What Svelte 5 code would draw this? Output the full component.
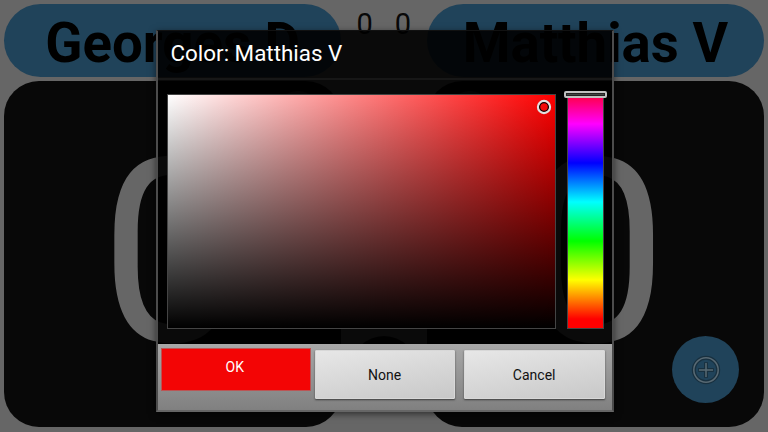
<script>
  const players = [{ name: 'Georges D', score: 0 }, { name: 'Matthias V', score: 0 }];
  const sets = [0, 0];
</script>

<main class="screen">
  <header class="names">
    <div class="pill"><span class="first">{players[0].name}</span></div>
    <div class="sets">{#each sets as value}<span>{value}</span>{/each}</div>
    <div class="pill"><span class="second">{players[1].name}</span></div>
  </header>
  <section class="cards">
    {#each players as player}
      <div class="card"><span class="score">{player.score}</span></div>
    {/each}
  </section>
  <i class="swap"></i>
  <i class="dot left"></i>
  <i class="dot right"></i>
  <div class="fab">
    <svg viewBox="0 0 32 32" width="32" height="32" fill="none">
      <circle cx="16" cy="16" r="12.2" stroke="#18303f" stroke-width="4" />
      <path d="M16 8.2v15.6M8.2 16h15.6" stroke="#18303f" stroke-width="4" />
      <circle cx="16" cy="16" r="12.2" stroke="#586973" stroke-width="1.5" />
      <path d="M16 9v14M9 16h14" stroke="#586973" stroke-width="1.5" />
    </svg>
  </div>
</main>

<div class="dialog" role="dialog" aria-label="Color">
  <h1>Color: Matthias V</h1>
  <div class="picker">
    <div class="field"><svg class="pointer" viewBox="0 0 16 16" width="16" height="16" fill="none"><circle cx="8" cy="8" r="4.5" stroke="#100" stroke-width="1.5" /><circle cx="8" cy="8" r="6.1" stroke="#e0e0e0" stroke-width="2.1" /></svg></div>
    <div class="hue"><i class="tracker"></i></div>
  </div>
  <footer>
    <button class="ok">OK</button>
    <button>None</button>
    <button>Cancel</button>
  </footer>
</div>

<style>
  :global(body) { background: #666; overflow: hidden; }
  * { box-sizing: border-box; }
  .screen {
    position: relative; width: 768px; height: 432px; padding: 4px 4px 5px 3.5px;
    display: flex; flex-direction: column; gap: 4px; overflow: hidden;
    background: #666; font-family: Roboto, sans-serif; color: #000;
  }
  .names { display: flex; height: 73px; }
  .pill {
    flex: 1; border-radius: 36.5px; background: #20435a;
    display: flex; justify-content: center; font-size: 54.6px; font-weight: 700;
    line-height: 79px; white-space: nowrap;
  }
  .first { margin-left: 1px; }
  .sets {
    width: 86px; display: flex; justify-content: center; gap: 22px;
    font-size: 29px; line-height: 40px; color: #080808;
  }
  .cards { display: flex; gap: 86px; height: 346px; }
  .card {
    flex: 1; border-radius: 35px; background: #080808;
    display: flex; justify-content: center; align-items: center;
  }
  .score { color: #666; font-size: 257px; line-height: 300px; margin-top: 0; }
  .swap {
    position: absolute; left: 351px; top: 336px; width: 66px; height: 66px;
    border-radius: 50%; background: #080808;
  }
  .dot { position: absolute; top: 91px; width: 40px; height: 40px; border-radius: 50%; background: #303030; }
  .dot.left { left: 278px; }
  .dot.right { left: 450px; }
  .fab {
    position: absolute; left: 672px; top: 336px; width: 67px; height: 67px;
    border-radius: 50%; background: #20435a; display: grid; place-items: center;
  }
  .dialog {
    position: absolute; left: 156px; top: 30px; width: 458px; height: 382px;
    display: flex; flex-direction: column;
    border: 2px solid #4c4c4c; border-top: 1px solid #111; border-bottom-color: #666;
    background: rgba(0, 0, 0, .9); background-clip: padding-box;
    box-shadow: 0 2px 7px rgba(0, 0, 0, .55);
    font-family: Roboto, sans-serif;
  }
  h1 {
    margin: 0; height: 49px; padding-left: 12.5px; border-bottom: 2px solid #171717;
    color: #fff; font-size: 22.4px; line-height: 44px; font-weight: 400;
  }
  .picker { height: 264px; padding: 14px 7px 0 9px; display: flex; gap: 11px; }
  .field {
    position: relative; flex: none; width: 389px; height: 235px; border: 1px solid #444;
    background: linear-gradient(to bottom, transparent, #000), linear-gradient(to right, #fff, #f00);
  }
  .pointer { position: absolute; left: 368.3px; top: 4px; }
  .hue {
    position: relative; flex: none; width: 37px; height: 235px; border: 1px solid #444;
    background: linear-gradient(to bottom, #f00 -10px, #f0f 29px, #00f 68px, #0ff 107px, #0f0 146px, #ff0 185px, #f00 224px);
  }
  .tracker {
    position: absolute; left: -4px; top: -4px; width: 43px; height: 7px;
    border: 2px solid #c0c0c0; border-radius: 2px; box-shadow: inset 0 0 0 1px #222;
  }
  footer {
    flex: 1; display: flex; align-items: flex-start; gap: 9px; padding: 4px 7px 0 3px;
    background: linear-gradient(#a8a8a8, #808080);
  }
  button {
    width: 141px; height: 49px; margin: 2px 0 0; padding: 1px 1px 0 0;
    border: 1px solid #d8d8d8; border-radius: 1px;
    background: linear-gradient(170deg, #e7e7e7, #c8c8c8);
    box-shadow: 0 1px 2px rgba(0, 0, 0, .55);
    color: #111; font: 400 14px Roboto, sans-serif;
  }
  .ok {
    width: 150px; height: 43px; margin: 0 -5px 0 0; padding: 0 2px 5px 0;
    border: 1px solid #b55; border-radius: 0; box-shadow: none;
    background: #f30505; color: #fff;
  }
</style>
